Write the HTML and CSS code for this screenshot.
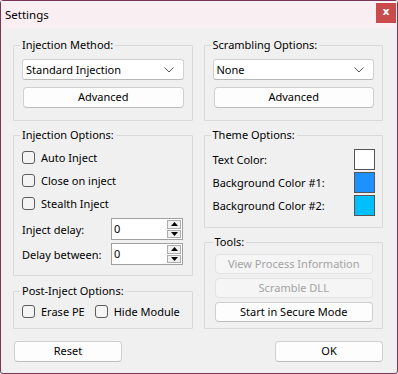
FILE: index.html
```html
<!DOCTYPE html>
<html>
<head>
<meta charset="utf-8">
<link rel="stylesheet" href="styles.css">
</head>
<body>
<div class="window">
  <div class="titlebar">
    <span class="title">Settings</span>
    <span class="close">x</span>
  </div>
  <div class="content">
    <div class="columns">
      <div class="col col-left">
        <fieldset class="group g-method">
          <legend>Injection Method:</legend>
          <div class="select"><span>Standard Injection</span><svg class="chev" width="10" height="6" viewBox="0 0 10 6"><path d="M0.5 0.5 L5 5 L9.5 0.5" fill="none" stroke="#555" stroke-width="1"/></svg></div>
          <div class="btn btn-adv">Advanced</div>
        </fieldset>
        <fieldset class="group g-opts">
          <legend>Injection Options:</legend>
          <div class="check-row"><span class="box"></span><span>Auto Inject</span></div>
          <div class="check-row"><span class="box"></span><span>Close on inject</span></div>
          <div class="check-row"><span class="box"></span><span>Stealth Inject</span></div>
          <div class="num-row first">
            <span class="num-label">Inject delay:</span>
            <div class="numbox"><span class="num-val">0</span>
              <div class="spin"><span class="spin-btn"><svg width="7" height="4" viewBox="0 0 7 4"><path d="M3.5 0 L7 4 L0 4 Z" fill="#000"/></svg></span><span class="spin-btn"><svg width="7" height="4" viewBox="0 0 7 4"><path d="M0 0 L7 0 L3.5 4 Z" fill="#000"/></svg></span></div>
            </div>
          </div>
          <div class="num-row">
            <span class="num-label">Delay between:</span>
            <div class="numbox"><span class="num-val">0</span>
              <div class="spin"><span class="spin-btn"><svg width="7" height="4" viewBox="0 0 7 4"><path d="M3.5 0 L7 4 L0 4 Z" fill="#000"/></svg></span><span class="spin-btn"><svg width="7" height="4" viewBox="0 0 7 4"><path d="M0 0 L7 0 L3.5 4 Z" fill="#000"/></svg></span></div>
            </div>
          </div>
        </fieldset>
        <fieldset class="group g-post">
          <legend>Post-Inject Options:</legend>
          <div class="post-row">
            <div class="check-row"><span class="box"></span><span>Erase PE</span></div>
            <div class="check-row"><span class="box"></span><span>Hide Module</span></div>
          </div>
        </fieldset>
      </div>
      <div class="col col-right">
        <fieldset class="group g-method">
          <legend>Scrambling Options:</legend>
          <div class="select"><span>None</span><svg class="chev" width="10" height="6" viewBox="0 0 10 6"><path d="M0.5 0.5 L5 5 L9.5 0.5" fill="none" stroke="#555" stroke-width="1"/></svg></div>
          <div class="btn btn-adv">Advanced</div>
        </fieldset>
        <fieldset class="group g-theme">
          <legend>Theme Options:</legend>
          <div class="color-row"><span>Text Color:</span><span class="swatch sw-white"></span></div>
          <div class="color-row"><span>Background Color #1:</span><span class="swatch sw-blue1"></span></div>
          <div class="color-row"><span>Background Color #2:</span><span class="swatch sw-blue2"></span></div>
        </fieldset>
        <fieldset class="group g-tools">
          <legend>Tools:</legend>
          <div class="btn btn-tool disabled">View Process Information</div>
          <div class="btn btn-tool disabled">Scramble DLL</div>
          <div class="btn btn-tool">Start in Secure Mode</div>
        </fieldset>
      </div>
    </div>
    <div class="footer">
      <div class="btn btn-foot">Reset</div>
      <div class="btn btn-foot">OK</div>
    </div>
  </div>
</div>
</body>
</html>
```

FILE: styles.css
```css
* { box-sizing: border-box; }
html, body { margin: 0; padding: 0; }
body {
  width: 398px;
  height: 374px;
  font-family: "Noto Sans", "Open Sans", sans-serif;
  font-size: 11px;
  color: #000;
  background: #f0f0f0;
  overflow: hidden;
  white-space: nowrap;
}
.window {
  width: 398px;
  height: 374px;
  border: 1px solid #7a3556;
  border-radius: 3px;
  background: #f0f0f0;
  display: flex;
  flex-direction: column;
}
.titlebar {
  height: 27px;
  background: #f9eef2;
  display: flex;
  align-items: center;
  justify-content: space-between;
  padding: 0 0 0 4px;
  flex: none;
}
.title {
  font-size: 11.5px;
  line-height: 16px;
}
.close {
  width: 20px;
  height: 20px;
  background: #c94b4b;
  color: #fff;
  font-family: "DejaVu Sans", sans-serif;
  font-weight: bold;
  font-size: 11px;
  line-height: 17px;
  text-align: center;
  margin-right: 1px;
  margin-top: -4px;
}
.content {
  flex: 1;
  display: flex;
  flex-direction: column;
  padding: 9px 14px 0 12px;
}
.columns {
  display: flex;
  gap: 11px;
}
.col {
  width: 180px;
  display: flex;
  flex-direction: column;
}
.group {
  margin: 0;
  border: 1px solid #d9d9d9;
  border-radius: 1px;
  padding: 0 8px;
  min-width: 0;
}
.group legend {
  margin-left: -2px;
  padding: 0 2px;
  line-height: 16px;
  font-size: 11px;
}
.g-method { padding-top: 6px; padding-bottom: 12px; }
.g-opts { margin-top: 6px; padding-top: 3px; padding-bottom: 10px; }
.g-post { margin-top: 7px; padding-top: 1px; padding-bottom: 5px; }
.g-theme { margin-top: 6px; padding-top: 5px; padding-bottom: 10px; padding-right: 7px; }
.g-tools { margin-top: 6px; padding-top: 4px; padding-bottom: 6px; padding-left: 10px; padding-right: 9px; }

.select {
  height: 21px;
  background: #fff;
  border: 1px solid #d0d0d0;
  border-bottom-color: #b8b8b8;
  border-radius: 3px;
  display: flex;
  align-items: center;
  justify-content: space-between;
  padding: 0 9px 0 3px;
  line-height: 16px;
}
.chev { display: block; }
.btn {
  background: #fdfdfd;
  border: 1px solid #d0d0d0;
  border-bottom-color: #bdbdbd;
  border-radius: 4px;
  text-align: center;
  line-height: 18px;
  height: 21px;
}
.btn-adv { margin-top: 7px; margin-left: 1px; }
.btn-tool { height: 20px; line-height: 18px; }
.btn-tool + .btn-tool { margin-top: 4px; }
.btn.disabled {
  background: #f5f5f5;
  border-color: #e3e3e3;
  color: #a3a3a3;
}
.check-row {
  height: 23px;
  display: flex;
  align-items: center;
  gap: 6px;
}
.box {
  width: 13px;
  height: 13px;
  border: 1px solid #5c5c5c;
  border-radius: 3px;
  background: #f4f4f4;
  flex: none;
}
.num-row {
  display: flex;
  align-items: center;
  height: 22px;
  margin-top: 3px;
}
.num-label { width: 89px; }
.numbox {
  display: flex;
  height: 22px;
  width: 72px;
  border: 1px solid #a0a0a0;
  background: #fff;
}
.num-val {
  flex: 1;
  padding-left: 2px;
  line-height: 19px;
}
.spin {
  width: 15px;
  display: flex;
  flex-direction: column;
  gap: 1px;
  padding: 1px 1px 1px 0;
}
.spin-btn {
  flex: 1;
  background: #f0f0f0;
  border: 1px solid #adadad;
  display: flex;
  align-items: center;
  justify-content: center;
}
.spin-btn svg { display: block; }
.post-row {
  display: flex;
  gap: 10px;
}
.color-row {
  height: 23px;
  display: flex;
  align-items: center;
  justify-content: space-between;
}
.swatch {
  width: 21px;
  height: 21px;
  border: 1px solid #555;
}
.sw-white { background: #ffffff; }
.sw-blue1 { background: #1e90ff; }
.sw-blue2 { background: #00bfff; }
.footer {
  display: flex;
  justify-content: space-between;
  margin-top: 12px;
  padding: 0 0 0 1px;
}
.btn-foot { width: 108px; height: 21px; }
```
